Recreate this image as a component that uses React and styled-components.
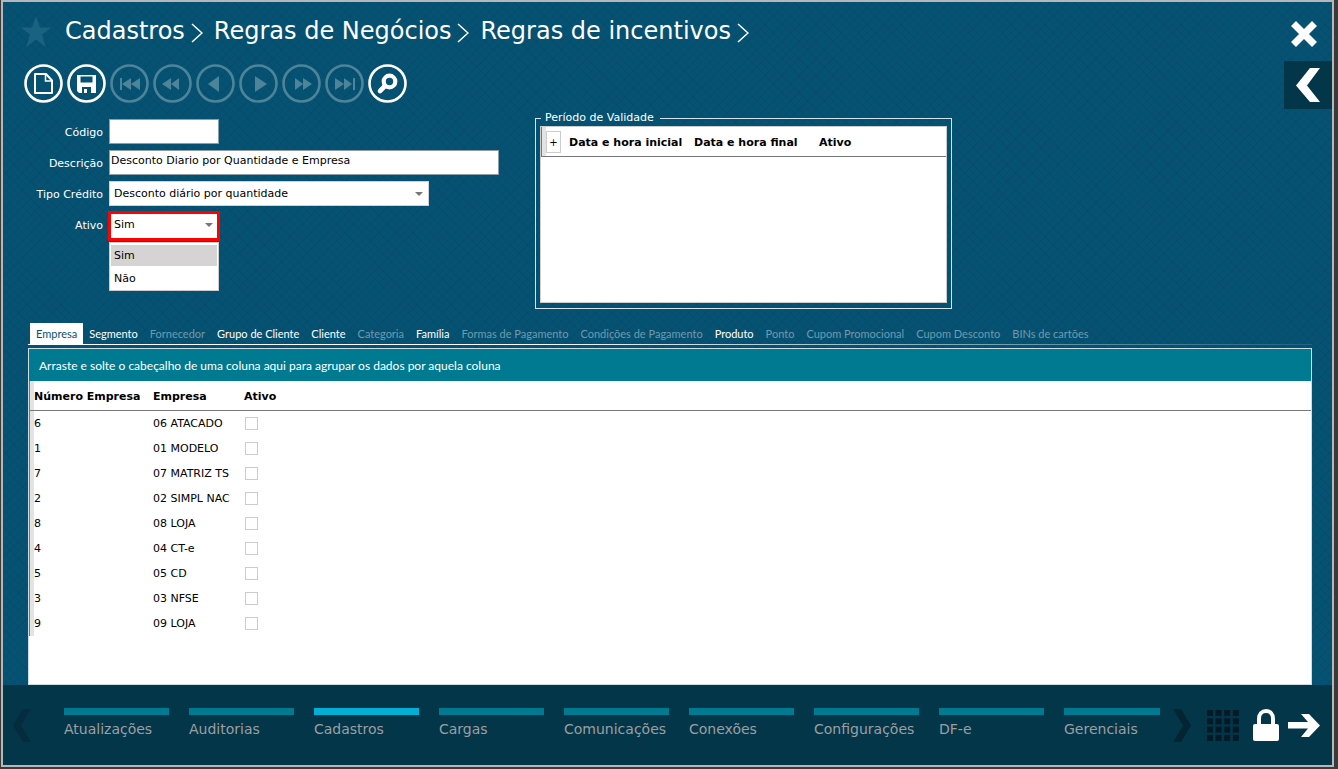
import { useState } from "react";
import styled, { createGlobalStyle, css } from "styled-components";

const crumbs = ["Cadastros", "Regras de Negócios", "Regras de incentivos"];

const tabs = [
  { name: "Empresa", enabled: true },
  { name: "Segmento", enabled: true },
  { name: "Fornecedor" },
  { name: "Grupo de Cliente", enabled: true },
  { name: "Cliente", enabled: true },
  { name: "Categoria" },
  { name: "Família", enabled: true },
  { name: "Formas de Pagamento" },
  { name: "Condições de Pagamento" },
  { name: "Produto", enabled: true },
  { name: "Ponto" },
  { name: "Cupom Promocional" },
  { name: "Cupom Desconto" },
  { name: "BINs de cartões" },
];

const companies = [
  { id: 6, name: "06 ATACADO" },
  { id: 1, name: "01 MODELO" },
  { id: 7, name: "07 MATRIZ TS" },
  { id: 2, name: "02 SIMPL NAC" },
  { id: 8, name: "08 LOJA" },
  { id: 4, name: "04 CT-e" },
  { id: 5, name: "05 CD" },
  { id: 3, name: "03 NFSE" },
  { id: 9, name: "09 LOJA" },
];

const menus = [
  "Atualizações",
  "Auditorias",
  "Cadastros",
  "Cargas",
  "Comunicações",
  "Conexões",
  "Configurações",
  "DF-e",
  "Gerenciais",
];

const tools = [
  {
    name: "Novo",
    enabled: true,
    icon: (
      <g fill="none" stroke="currentColor" strokeWidth="2">
        <path d="M11 10h11l6 6.5V29H11z" strokeLinejoin="round" />
        <path d="M21.5 10v7H28" strokeWidth="1.5" />
      </g>
    ),
  },
  {
    name: "Salvar",
    enabled: true,
    icon: (
      <path
        fillRule="evenodd"
        d="M10 11h19v18H12l-2-2zM13.500 12.500v6h12v-6zM15 23v6h2v-4h3v4h4v-6z"
      />
    ),
  },
  {
    name: "Primeiro",
    icon: <path d="M10 14h2v12h-2zM21 14v12l-9-6zM30 14v12l-9-6z" />,
  },
  { name: "Retroceder", icon: <path d="M18 14v12l-9-6zM26 14v12l-8-6z" /> },
  { name: "Anterior", icon: <path d="M23 12v16l-11-8z" /> },
  { name: "Próximo", icon: <path d="M16 12v16l12-8z" /> },
  { name: "Avançar", icon: <path d="M13 14v12l8-6zM21 14v12l9-6z" /> },
  {
    name: "Último",
    icon: <path d="M10 14v12l9-6zM19 14v12l8-6zM28 14h2v12h-2z" />,
  },
  {
    name: "Pesquisar",
    enabled: true,
    icon: (
      <g fill="none" stroke="currentColor">
        <circle cx="21.500" cy="17.500" r="5.800" strokeWidth="4.200" />
        <path d="M17 22l-5 5" strokeWidth="4.600" strokeLinecap="round" />
      </g>
    ),
  },
];

export default function App() {
  const [tab, setTab] = useState("Empresa");
  const [active, setActive] = useState("Sim");
  const [description, setDescription] = useState(
    "Desconto Diario por Quantidade e Empresa"
  );

  return (
    <Desktop>
      <GlobalStyle />
      <Window>
        <Header>
          <Favorite aria-label="Favorito">
            <svg width="32" height="32" viewBox="0 0 32 32">
              <path d="M16 0l4 11.500h11.500l-9.400 7 3.600 12.500L16 23.500 6.300 31l3.600-12.500-9.400-7H12z" />
            </svg>
          </Favorite>
          <Title>
            {crumbs.map((crumb) => (
              <Crumb key={crumb}>
                {crumb}
                <svg width="12" height="20" viewBox="0 0 12 20">
                  <path d="M1 1l10 9-10 9" />
                </svg>
              </Crumb>
            ))}
          </Title>
          <CloseButton aria-label="Fechar">
            <svg width="26" height="26" viewBox="0 0 26 26">
              <path d="M2.500 2.500l21 21M23.500 2.500l-21 21" />
            </svg>
          </CloseButton>
        </Header>

        <ToolRow>
          <Toolbar>
            {tools.map(({ name, enabled, icon }) => (
              <ToolButton key={name} aria-label={name} disabled={!enabled}>
                <svg width="39" height="39" viewBox="0 0 39 39">
                  <circle cx="19.500" cy="19.500" r="18" />
                  {icon}
                </svg>
              </ToolButton>
            ))}
          </Toolbar>
          <SideToggle aria-label="Abrir painel">
            <svg width="24" height="34" viewBox="0 0 24 34">
              <path d="M14 0h10L11 17.500 24 34H14L0 17.500z" />
            </svg>
          </SideToggle>
        </ToolRow>

        <FormArea>
          <Fields>
            <Label htmlFor="codigo">Código</Label>
            <TextInput id="codigo" $width={110} />
            <Label htmlFor="descricao">Descrição</Label>
            <TextInput
              id="descricao"
              $width={390}
              value={description}
              onChange={(e) => setDescription(e.target.value)}
            />
            <Label htmlFor="tipo">Tipo Crédito</Label>
            <SelectBox $width={320}>
              <select id="tipo">
                <option>Desconto diário por quantidade</option>
              </select>
              <Caret />
            </SelectBox>
            <Label htmlFor="ativo">Ativo</Label>
            <SelectBox $width={110} $highlight>
              <select
                id="ativo"
                value={active}
                onChange={(e) => setActive(e.target.value)}
              >
                <option>Sim</option>
                <option>Não</option>
              </select>
              <Caret />
              <Options role="listbox" aria-label="Ativo">
                {["Sim", "Não"].map((option) => (
                  <Option
                    key={option}
                    role="option"
                    aria-selected={option === active}
                    $selected={option === active}
                    onClick={() => setActive(option)}
                  >
                    {option}
                  </Option>
                ))}
              </Options>
            </SelectBox>
          </Fields>

          <Period>
            <legend>Período de Validade</legend>
            <PeriodGrid>
              <PeriodTable>
                <thead>
                  <tr>
                    <th>
                      <AddButton aria-label="Adicionar">+</AddButton>
                    </th>
                    <th>Data e hora inicial</th>
                    <th>Data e hora final</th>
                    <th>Ativo</th>
                  </tr>
                </thead>
              </PeriodTable>
            </PeriodGrid>
          </Period>
        </FormArea>

        <Content>
          <TabList role="tablist">
            {tabs.map(({ name, enabled }) => (
              <Tab
                key={name}
                role="tab"
                disabled={!enabled}
                aria-selected={name === tab}
                $selected={name === tab}
                onClick={() => setTab(name)}
              >
                {name}
              </Tab>
            ))}
          </TabList>
          <Panel>
            <GroupBar>
              Arraste e solte o cabeçalho de uma coluna aqui para agrupar os
              dados por aquela coluna
            </GroupBar>
            <CompanyTable>
              <thead>
                <tr>
                  <th>Número Empresa</th>
                  <th>Empresa</th>
                  <th>Ativo</th>
                </tr>
              </thead>
              <tbody>
                {companies.map(({ id, name }) => (
                  <tr key={id}>
                    <td>{id}</td>
                    <td>{name}</td>
                    <td>
                      <Checkbox type="checkbox" aria-label={name} />
                    </td>
                  </tr>
                ))}
              </tbody>
            </CompanyTable>
          </Panel>
        </Content>

        <Footer>
          <ScrollButton aria-label="Menus anteriores">
            <svg width="18" height="33" viewBox="0 0 18 33">
              <path d="M10 0h8L8 16.500 18 33h-8L0 16.500z" />
            </svg>
          </ScrollButton>
          <Menu>
            {menus.map((name) => (
              <MenuItem key={name} href="#" $current={name === "Cadastros"}>
                {name}
              </MenuItem>
            ))}
          </Menu>
          <ScrollButton aria-label="Próximos menus" $dark>
            <svg width="18" height="33" viewBox="0 0 18 33">
              <path d="M8 0H0l10 16.500L0 33h8l10-16.500z" />
            </svg>
          </ScrollButton>
          <Actions>
            <IconButton aria-label="Aplicativos" $dark>
              <svg width="32" height="31" viewBox="0 0 32 31">
                {[0, 1, 2, 3].map((row) =>
                  [0, 1, 2, 3].map((col) => (
                    <rect
                      key={`${row}-${col}`}
                      x={col * 8.6}
                      y={row * 8.3}
                      width="6"
                      height="6"
                    />
                  ))
                )}
              </svg>
            </IconButton>
            <IconButton aria-label="Bloquear">
              <svg width="26" height="33" viewBox="0 0 26 33">
                <rect y="15" width="26" height="17" rx="2" />
                <path
                  d="M6 16V9.500C6 5 9 2 13 2s7 3 7 7.500V16"
                  fill="none"
                  stroke="currentColor"
                  strokeWidth="4"
                />
              </svg>
            </IconButton>
            <IconButton aria-label="Sair">
              <svg width="32" height="23" viewBox="0 0 32 23">
                <path d="M0 8h20l-7-8h8l11 11.500L21 23h-8l7-8.500H0z" />
              </svg>
            </IconButton>
          </Actions>
        </Footer>
      </Window>
    </Desktop>
  );
}

const GlobalStyle = createGlobalStyle`
  * {
    box-sizing: border-box;
  }
  body {
    margin: 0;
    font-family: Verdana, "DejaVu Sans", sans-serif;
    font-size: 11px;
  }
  button,
  input,
  select {
    font: inherit;
    color: inherit;
  }
  button {
    padding: 0;
    border: 0;
    background: none;
  }
  svg {
    display: block;
    fill: currentColor;
  }
`;

const Desktop = styled.div`
  display: flex;
  min-height: 100vh;
  padding: 0 4px 2px 1px;
  background: #3b3a39;
`;

const Window = styled.main`
  flex: 1;
  min-width: 0;
  display: flex;
  flex-direction: column;
  border: 2px solid #b4b8bc;
  color: #fff;
  background-color: #065272;
  background-image: repeating-linear-gradient(
      45deg,
      rgba(0, 40, 60, 0.09) 0 1px,
      transparent 1px 6px
    ),
    repeating-linear-gradient(
      -45deg,
      rgba(0, 40, 60, 0.09) 0 1px,
      transparent 1px 6px
    );
`;

const Header = styled.header`
  display: flex;
  align-items: center;
  height: 59px;
  padding: 0 15px 0 17px;
`;

const Favorite = styled.button`
  color: #1b6180;
`;

const Title = styled.nav`
  flex: 1;
  display: flex;
  gap: 11px;
  margin-left: 13px;
  padding-bottom: 2px;
  font-size: 24px;
  line-height: 30px;
`;

const Crumb = styled.span`
  display: flex;
  align-items: center;
  gap: 6px;
  svg {
    margin-top: 4px;
    fill: none;
    stroke: currentColor;
    stroke-width: 1.5;
  }
`;

const CloseButton = styled.button`
  margin-top: 4px;
  svg {
    stroke: currentColor;
    stroke-width: 7;
  }
`;

const ToolRow = styled.div`
  display: flex;
  justify-content: space-between;
  padding-left: 21px;
`;

const Toolbar = styled.div`
  display: flex;
  gap: 4px;
  padding-top: 3px;
`;

const ToolButton = styled.button`
  height: 39px;
  color: #fff;
  circle:first-child {
    fill: none;
    stroke: currentColor;
    stroke-width: 2.6;
  }
  g circle:first-child {
    stroke-width: 4.2;
  }
  &:disabled {
    color: #4d849a;
  }
`;

const SideToggle = styled.button`
  display: grid;
  place-items: center;
  width: 48px;
  height: 48px;
  background: #04364a;
`;

const FormArea = styled.section`
  display: flex;
  align-items: flex-start;
  gap: 36px;
  padding: 2px 20px 0 25px;
`;

const Fields = styled.div`
  display: grid;
  grid-template-columns: 75px 390px;
  grid-auto-rows: 25px;
  gap: 6px;
  padding-top: 8px;
`;

const Label = styled.label`
  line-height: 27px;
  text-align: right;
`;

const TextInput = styled.input`
  width: ${({ $width }) => $width}px;
  height: 25px;
  padding: 0 1px 4px;
  border: 1px solid #8f9dab;
  color: #000;
  background: #fff;
`;

const SelectBox = styled.div`
  position: relative;
  width: ${({ $width }) => $width}px;
  height: 25px;
  color: #000;
  select {
    width: 100%;
    height: 25px;
    padding: 0 4px;
    border: 1px solid #ccd2d6;
    background: #fff;
    appearance: none;
    ${({ $highlight }) =>
      $highlight &&
      css`
        height: 28px;
        padding-bottom: 4px;
        outline: 3px solid #f00;
        outline-offset: -2px;
      `}
  }
`;

const Caret = styled.span`
  position: absolute;
  top: 11px;
  right: 6px;
  border: 4px solid transparent;
  border-top-color: #777;
  border-bottom: 0;
  pointer-events: none;
`;

const Options = styled.ul`
  position: absolute;
  top: 30px;
  left: 0;
  display: grid;
  gap: 2px;
  width: 100%;
  margin: 0;
  padding: 2px 1px 1px;
  border: 1px solid #ccc;
  background: #fff;
  list-style: none;
`;

const Option = styled.li`
  height: 21px;
  padding-left: 3px;
  line-height: 21px;
  background: ${({ $selected }) => ($selected ? "#d5d3d4" : "#fff")};
`;

const Period = styled.fieldset`
  width: 417px;
  height: 198px;
  margin: 0;
  padding: 1px 4px 5px;
  border: 1px solid #d7e3e8;
  legend {
    height: 14px;
    margin-left: 1px;
    padding: 0 6px 0 4px;
    line-height: 14px;
  }
`;

const PeriodGrid = styled.div`
  height: 177px;
  border: 1px solid #ccc;
  background: #fff;
  color: #000;
`;

const gridHead = css`
  border-collapse: separate;
  border-spacing: 0;
  width: 100%;
  table-layout: fixed;
  th {
    height: 30px;
    padding: 1px 0 0;
    border-bottom: 1px solid #777;
    text-align: left;
    white-space: nowrap;
  }
  th:last-child {
    width: auto;
  }
`;

const rowMarker = css`
  background: linear-gradient(90deg, #777 1px, #e3e3e3 1px 5px, #fff 5px);
`;

const PeriodTable = styled.table`
  ${gridHead}
  th {
    width: 125px;
  }
  th:first-child {
    ${rowMarker}
    width: 28px;
    padding-left: 5px;
  }
`;

const AddButton = styled.button`
  display: block;
  width: 15px;
  height: 22px;
  border: 1px solid #ccc;
  background: #fff;
  font-size: 10px;
  font-weight: 400;
`;

const Content = styled.section`
  flex: 1;
  display: flex;
  flex-direction: column;
  padding: 14px 20px 0 25px;
  font-family: "Segoe UI", Lato, "Open Sans", sans-serif;
`;

const TabList = styled.div`
  display: flex;
  padding: 0 0 1px 2px;
  margin-bottom: 3px;
  background: linear-gradient(90deg, #fff 38%, rgba(255, 255, 255, 0.1)) bottom /
    100% 1px no-repeat;
`;

const Tab = styled.button`
  height: 21px;
  padding: 0 6px;
  white-space: nowrap;
  color: ${({ $selected }) => ($selected ? "#065272" : "#fff")};
  background: ${({ $selected }) => ($selected ? "#fff" : "none")};
  &:disabled {
    color: #6f9bae;
  }
`;

const Panel = styled.div`
  flex: 1;
  border: 1px solid #cfdde2;
  background: #fff;
`;

const GroupBar = styled.div`
  height: 32px;
  padding-left: 10px;
  font-size: 12px;
  line-height: 33px;
  background: #007a90;
`;

const CompanyTable = styled.table`
  ${gridHead}
  color: #000;
  font-family: Verdana, "DejaVu Sans", sans-serif;
  td {
    height: 25px;
    padding: 0;
  }
  th:nth-child(1) {
    width: 124px;
  }
  th:nth-child(2) {
    width: 91px;
  }
  th:first-child,
  td:first-child {
    ${rowMarker}
    padding-left: 5px;
  }
`;

const Checkbox = styled.input`
  display: block;
  width: 13px;
  height: 13px;
  margin: 0 1px;
  border: 1px solid #ccc;
  background: #fff;
  appearance: none;
  &:checked {
    background: #007a90;
  }
`;

const Footer = styled.footer`
  display: flex;
  height: 80px;
  padding: 0 12px 0 10px;
  background: #04364a;
`;

const ScrollButton = styled.button`
  color: ${({ $dark }) => ($dark ? "#032533" : "#042c3d")};
`;

const Menu = styled.nav`
  flex: 1;
  min-width: 0;
  display: flex;
  gap: 20px;
  margin: 23px 13px 0 33px;
  overflow: hidden;
`;

const MenuItem = styled.a`
  flex: 0 0 105px;
  min-width: 0;
  border-top: 7px solid ${({ $current }) => ($current ? "#00afd3" : "#007a90")};
  color: #9c9fa1;
  font-size: 14px;
  line-height: 28px;
  text-decoration: none;
`;

const Actions = styled.div`
  display: flex;
  align-items: center;
  gap: 9px;
  margin-left: 16px;
`;

const IconButton = styled.button`
  color: ${({ $dark }) => ($dark ? "#021a26" : "#fff")};
  padding-right: ${({ $dark }) => ($dark ? "5px" : "0")};
`;
